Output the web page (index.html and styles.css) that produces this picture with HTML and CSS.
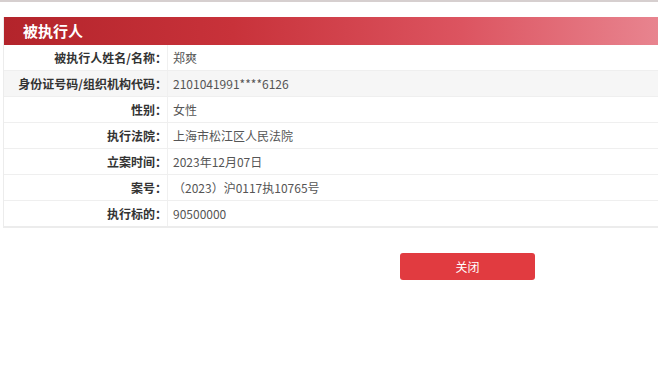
FILE: index.html
```html
<!DOCTYPE html>
<html lang="zh-CN">
<head>
  <meta charset="UTF-8">
  <meta name="viewport" content="width=device-width, initial-scale=1.0">
  <title>被执行人</title>
  <link rel="stylesheet" href="styles.css">
</head>
<body>
  <div class="page">
    <div class="panel">
      <div class="panel-title">被执行人</div>
      <table class="info">
        <tr><th>被执行人姓名/名称：</th><td>郑爽</td></tr>
        <tr class="shade"><th>身份证号码/组织机构代码：</th><td>2101041991****6126</td></tr>
        <tr><th>性别：</th><td>女性</td></tr>
        <tr><th>执行法院：</th><td>上海市松江区人民法院</td></tr>
        <tr><th>立案时间：</th><td>2023年12月07日</td></tr>
        <tr><th>案号：</th><td>（2023）沪0117执10765号</td></tr>
        <tr><th>执行标的：</th><td>90500000</td></tr>
      </table>
    </div>
    <div class="actions">
      <button class="btn-close" type="button">关闭</button>
    </div>
  </div>
</body>
</html>
```

FILE: styles.css
```css
/* 被执行人详情 */
body {
  margin: 0;
  background-color: #fff;
  font-family: "Noto Sans CJK SC", "Microsoft YaHei", sans-serif;
  border-top: 2px solid #d6cfcf;
}
.page {
  padding: 15px 0 0 3px;
}
.panel {
  border-left: 1px solid #ececec;
  border-bottom: 2px solid #ececec;
}
.panel-title {
  height: 28px;
  line-height: 28px;
  padding-left: 19px;
  font-size: 15px;
  font-weight: bold;
  color: #fff;
  background: linear-gradient(to right, #b3242b, #c8323a 35%, #dc5460 70%, #e8848f);
}
.info {
  width: 100%;
  border-collapse: collapse;
  font-size: 12px;
}
.info th,
.info td {
  height: 25px;
  padding: 0;
  border-bottom: 1px solid #efefef;
}
.info tr:last-child th,
.info tr:last-child td {
  border-bottom: none;
}
.info th {
  width: 163px;
  text-align: right;
  font-weight: bold;
  color: #333;
  border-right: 1px solid #f0f0f0;
}
.info td {
  padding-left: 5px;
  color: #555;
}
.info tr.shade td,
.info tr.shade th {
  background-color: #f6f6f6;
}
.actions {
  padding: 25px 0 0 397px;
}
.btn-close {
  width: 135px;
  height: 27px;
  border: none;
  border-radius: 3px;
  background-color: #e13b40;
  color: #fff;
  font-family: inherit;
  font-size: 12px;
  cursor: pointer;
}
```
